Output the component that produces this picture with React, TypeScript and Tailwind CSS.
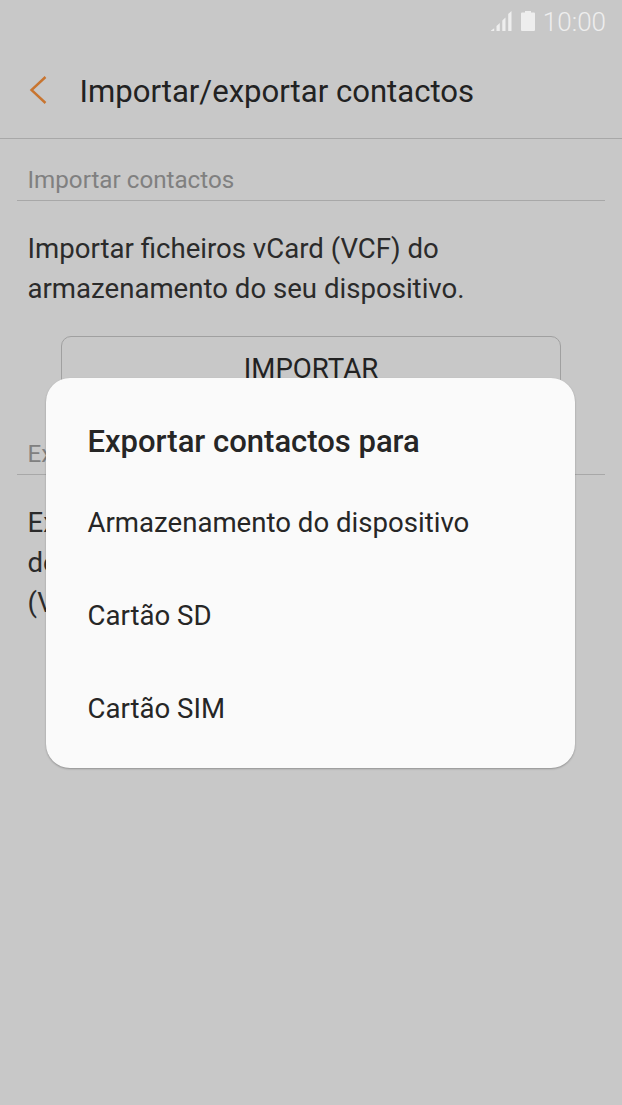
import React from 'react';

const exportTargets = ['Armazenamento do dispositivo', 'Cartão SD', 'Cartão SIM'];

const StatusBar: React.FC = () => (
    <div className="flex h-[44px] items-start justify-end pr-4 text-[#eeeeee]">
        <svg width="21" height="20" viewBox="0 0 21 20" fill="currentColor" className="mt-[11px] mr-[9px]">
            <path d="M0 20v-.5l3.200-2.300V20zM5.500 20v-5l3.300-3v8zM11.300 20V9.500l3.200-3V20zM17.200 20V3l3.300-3v20z" />
        </svg>
        <svg width="14" height="20" viewBox="0 0 14 20" fill="currentColor" className="mt-[11px] mr-[8px]">
            <path d="M4 0h6v1.500h3a1 1 0 0 1 1 1V19a1 1 0 0 1-1 1H1a1 1 0 0 1-1-1V2.500a1 1 0 0 1 1-1h3z" />
        </svg>
        <span className="text-[26px] leading-[44px] font-light">10:00</span>
    </div>
);

const Header: React.FC = () => (
    <header className="flex h-[95px] items-center border-b border-[#a8a8a8] pl-[29px]">
        <svg width="18" height="28" viewBox="0 0 18 28" fill="none" stroke="#c87530" strokeWidth="2.4" className="mr-[32.5px] mb-[3px]">
            <path d="M16.500 1 2.500 14 16.500 27" />
        </svg>
        <h1 className="pt-[1px] text-[31.1px] leading-[40px] text-[#222222]">Importar/exportar contactos</h1>
    </header>
);

const SectionTitle: React.FC<{ children: React.ReactNode }> = ({ children }) => (
    <h2 className="mr-[17px] ml-[17px] h-[39px] border-b border-[#a8a8a8] pl-[10.5px] text-[24.2px] leading-[36px] text-[#808080]">
        {children}
    </h2>
);

const ActionButton: React.FC<{ label: string }> = ({ label }) => (
    <button className="mt-[27px] ml-[61px] flex h-[64px] w-[500px] items-center justify-center rounded-[10px] border border-[#a0a0a0] pt-[2px] text-[27.6px] text-[#222222]">
        {label}
    </button>
);

const ExportDialog: React.FC = () => (
    <div className="absolute inset-0 flex items-start pt-[378px] pl-[46px]">
        <div
            role="dialog"
            className="h-[390px] w-[529px] rounded-[24px] bg-[#fafafa] pt-[44px] pl-[41.5px] text-[#262626] shadow-[0_1px_2px_rgba(0,0,0,0.28)]"
        >
            <h2 className="mb-[14px] text-[31px] leading-[40px] font-medium">Exportar contactos para</h2>
            <ul>
                {exportTargets.map((target) => (
                    <li key={target} className="h-[93px] text-[27.6px] leading-[93px]">
                        {target}
                    </li>
                ))}
            </ul>
        </div>
    </div>
);

const App: React.FC = () => (
    <div className="relative h-[1105px] w-[622px] overflow-hidden bg-[#c8c8c8] font-['Roboto',sans-serif]">
        <StatusBar />
        <Header />
        <main className="pt-[23px]">
            <SectionTitle>Importar contactos</SectionTitle>
            <p className="mt-[28px] pl-[27.5px] text-[27.6px] leading-[40px] text-[#2b2b2b]">
                Importar ficheiros vCard (VCF) do
                <br />
                armazenamento do seu dispositivo.
            </p>
            <ActionButton label="IMPORTAR" />
            <div className="h-[36px]" />
            <SectionTitle>Ex</SectionTitle>
            <p className="mt-[28px] pl-[27.5px] text-[27.6px] leading-[40px] text-[#2b2b2b]">
                Ex
                <br />
                de
                <br />
                (V
            </p>
        </main>
        <ExportDialog />
    </div>
);

export default App;
